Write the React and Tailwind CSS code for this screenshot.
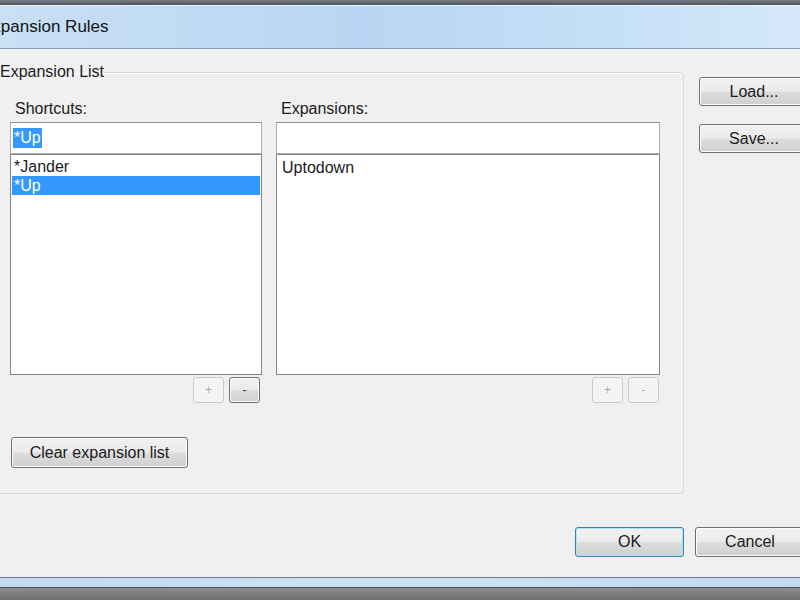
import React, { useState } from 'react';

const font = { fontFamily: '"Liberation Sans", Arial, sans-serif' };

// Win7-ish push button
const WinButton = ({ children, className = '', focused = false }) => (
  <button
    className={`rounded-[3px] border ${
      focused ? 'border-[#3c7fb1] shadow-[inset_0_0_0_1px_#aee3f7]' : 'border-[#707070] shadow-[inset_0_0_0_1px_#fbfbfb]'
    } bg-[linear-gradient(#f2f2f2_0%,#ebebeb_48%,#dddddd_52%,#cfcfcf_100%)] text-[16px] text-[#1b1b1b] leading-none flex items-center justify-center ${className}`}
  >
    {children}
  </button>
);

const SmallButton = ({ label, active = false }) => (
  <button
    className={`w-[31px] h-[26px] rounded-[3px] border flex items-center justify-center text-[12px] leading-none ${
      active
        ? 'border-[#707070] bg-[linear-gradient(#f2f2f2_0%,#ebebeb_48%,#dddddd_52%,#cfcfcf_100%)] text-[#333] shadow-[inset_0_0_0_1px_#fbfbfb]'
        : 'border-[#c9c9c9] bg-[#f4f4f4] text-[#a8a8a8]'
    }`}
  >
    {label}
  </button>
);

const App = () => {
  const [selected, setSelected] = useState('*Up');
  const shortcuts = ['*Jander', '*Up'];

  return (
    <div style={font} className="w-[800px] h-[600px] overflow-hidden flex flex-col bg-[#f0f0f0] text-[#1b1b1b]">
      {/* window frame top */}
      <div className="h-[5px] bg-[linear-gradient(#7a7e83,#50555b)]" />
      <div className="h-[44px] flex items-center border-t border-[#e8f2fb] border-b border-b-[#8a9db1] bg-[linear-gradient(90deg,#c9e0f5_0%,#b8d6f3_45%,#c4dff7_75%,#d5e8f9_100%)]">
        <span className="-ml-[19px] text-[17px] text-[#111]">Expansion Rules</span>
      </div>

      {/* dialog body */}
      <div className="flex-1 flex flex-col">
        <div className="flex items-start">
          <fieldset className="-ml-[9px] mt-[14px] w-[693px] pl-[8px] pr-[23px] pb-[25px] border border-[#d5d9dc] rounded-[3px] shadow-[inset_1px_1px_0_#fff]">
            <legend className="text-[16px] leading-[18px]">Expansion List</legend>
            <div className="pl-[10px] pt-[19px] flex gap-[14px]">
              {/* shortcuts column */}
              <div className="w-[252px] flex flex-col">
                <div className="h-[18px] leading-[18px] text-[16px] pl-[5px] mb-[4px]">Shortcuts:</div>
                <div className="h-[32px] border border-[#abadb3] border-t-[#8e8f8f] bg-white pl-[2px] flex items-center">
                  <span className="bg-[#3399ff] text-white text-[16px] leading-[20px] px-[1px]">*Up</span>
                </div>
                <div className="h-[221px] border border-[#828790] bg-white p-[1px] pt-[2px]">
                  {shortcuts.map(s => (
                    <div
                      key={s}
                      onClick={() => setSelected(s)}
                      className={`h-[19px] leading-[19px] text-[16px] pl-[2px] ${
                        s === selected ? 'bg-[#3399ff] text-white' : ''
                      }`}
                    >
                      {s}
                    </div>
                  ))}
                </div>
                <div className="flex justify-end gap-[5px] pr-[2px] mt-[2px]">
                  <SmallButton label="+" />
                  <SmallButton label="-" active />
                </div>
                <WinButton className="mt-[34px] ml-[1px] w-[177px] h-[31px]">Clear expansion list</WinButton>
              </div>

              {/* expansions column */}
              <div className="w-[384px] flex flex-col">
                <div className="h-[18px] leading-[18px] text-[16px] pl-[5px] mb-[4px]">Expansions:</div>
                <div className="h-[32px] border border-[#abadb3] border-t-[#8e8f8f] bg-white" />
                <div className="h-[221px] border border-[#828790] bg-white pl-[5px] pt-[3px] text-[16px] leading-[19px]">
                  Uptodown
                </div>
                <div className="flex justify-end gap-[5px] pr-[1px] mt-[2px]">
                  <SmallButton label="+" />
                  <SmallButton label="-" />
                </div>
              </div>
            </div>
          </fieldset>

          <div className="ml-[15px] mt-[28px] flex flex-col gap-[18px]">
            <WinButton className="w-[110px] h-[29px]">Load...</WinButton>
            <WinButton className="w-[110px] h-[29px]">Save...</WinButton>
          </div>
        </div>

        <div className="mt-auto mb-[20px] flex justify-end gap-[11px] -mr-[5px]">
          <WinButton focused className="w-[109px] h-[30px]">OK</WinButton>
          <WinButton className="w-[110px] h-[30px]">Cancel</WinButton>
        </div>
      </div>

      {/* window frame bottom */}
      <div className="h-[1px] bg-[#6b7c8e]" />
      <div className="h-[9px] bg-[linear-gradient(90deg,#c2d9ef,#cfe2f5,#c2d9ef)]" />
      <div className="h-[1px] bg-[#46505a]" />
      <div className="h-[12px] bg-[linear-gradient(#8e8e8e,#6c6c6c)]" />
    </div>
  );
};

export default App;
